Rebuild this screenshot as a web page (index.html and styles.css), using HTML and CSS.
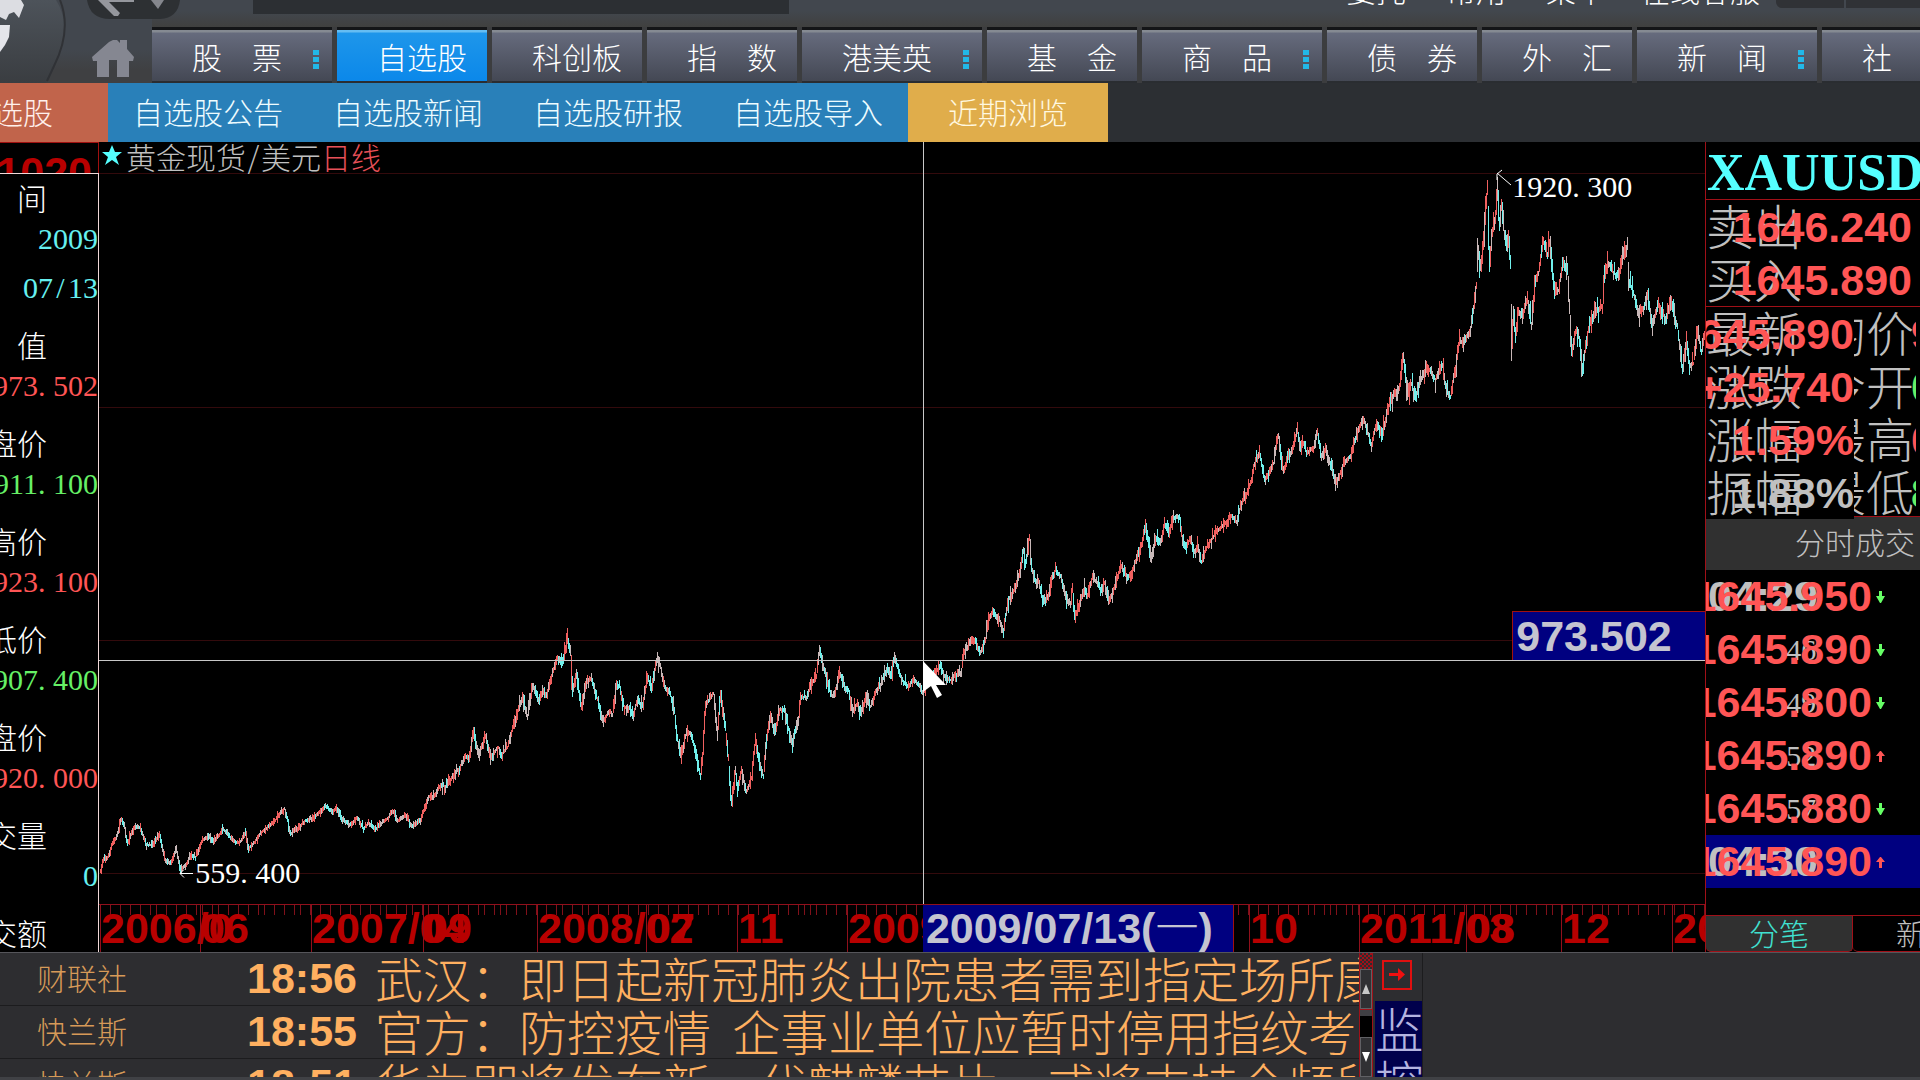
FILE: index.html
```html
<!DOCTYPE html>
<html lang="zh-CN">
<head>
<meta charset="utf-8">
<title>黄金现货/美元 日线</title>
<link rel="stylesheet" href="styles.css">
</head>
<body>
<header class="top">
  <div class="brand">
    <svg class="brand-art" viewBox="0 0 152 83" aria-hidden="true">
      <defs><linearGradient id="disc" x1="0" y1="0" x2="0" y2="1"><stop offset="0" stop-color="#4d535a"/><stop offset="1" stop-color="#3a3d41"/></linearGradient></defs>
      <path d="M56 0Q72 26 57 60Q53 73 46 83H0V0Z" fill="url(#disc)"/>
      <path d="M60 0Q72 30 54 66L47 81" fill="none" stroke="#303236" stroke-width="2"/>
      <path d="M0 0H21L24 5L19 18L14 12L9 14L6 20L0 17Z" fill="#dcdde2"/>
      <path d="M0 25H10L9 37L5 45L0 52Z" fill="#e4e5ea"/>
      <path d="M87 0Q90 19 110 19H160Q178 18 180 0Z" fill="#2d3033"/>
      <path d="M98 0H134V2H109L120 13L118 16H114Z" fill="#95979d"/>
      <path d="M151 0H164L158 9Z" fill="#85878d"/>
      <path d="M92 57L109 42L113 40H117L120 43V40H127V49L134 57L133 61H129V77H117V60H109V77H97V61H93Z" fill="#858791"/>
    </svg>
  </div>
  <div class="top-body">
    <div class="utility">
      <input class="search" type="text" aria-label="搜索">
      <a href="#">委托</a><a href="#">常用</a><a href="#">菜单</a><a href="#">在线客服</a>
      <button class="window-button" aria-label="最小化"></button><button class="window-button" aria-label="最大化"></button>
    </div>
    <nav class="tabs">
      <a class="tab wide" href="#">股　票<i class="dots"></i></a>
      <a class="tab active" href="#">自选股</a>
      <a class="tab" href="#">科创板</a>
      <a class="tab" href="#">指　数</a>
      <a class="tab wide" href="#">港美英<i class="dots"></i></a>
      <a class="tab" href="#">基　金</a>
      <a class="tab wide" href="#">商　品<i class="dots"></i></a>
      <a class="tab" href="#">债　券</a>
      <a class="tab" href="#">外　汇</a>
      <a class="tab wide" href="#">新　闻<i class="dots"></i></a>
      <a class="tab" href="#">社　区</a>
    </nav>
  </div>
</header>
<nav class="subtabs">
  <a class="own" href="#">自选股</a>
  <a href="#">自选股公告</a>
  <a href="#">自选股新闻</a>
  <a href="#">自选股研报</a>
  <a href="#">自选股导入</a>
  <a class="recent" href="#">近期浏览</a>
</nav>
<main class="main">
  <aside class="readout">
    <div class="scale-top num">1020</div>
    <div class="readout-list">
      <div class="label">时　间</div>
      <div class="value cyan">2009</div>
      <div class="value cyan">07<span class="slash">/</span>13</div>
      <div class="label">数　值</div>
      <div class="value red">973<span class="dot">.</span>502</div>
      <div class="label">开盘价</div>
      <div class="value green">911<span class="dot">.</span>100</div>
      <div class="label">最高价</div>
      <div class="value red">923<span class="dot">.</span>100</div>
      <div class="label">最低价</div>
      <div class="value green">907<span class="dot">.</span>400</div>
      <div class="label">收盘价</div>
      <div class="value red">920<span class="dot">.</span>000</div>
      <div class="label">成交量</div>
      <div class="value cyan">0</div>
      <div class="label">成交额</div>
    </div>
  </aside>
  <section class="chart">
    <div class="plot">
      <svg class="plot-art" id="plot" viewBox="99 142 1606 762" preserveAspectRatio="none" aria-hidden="true">
        <path d="M99 173.500H1705M99 407.500H1705M99 640.500H1705M99 873.500H1705" stroke="#330a0c"/>
        <g id="bars"></g>
        <path d="M193 873.500H180M184 869.500L180 873.500L184 877.500" fill="none" stroke="#fff"/>
        <path d="M1511 185L1497 173M1502 170L1497 174V180" fill="none" stroke="#fff"/>
        <path d="M923.500 142V904M99 660.500H1705" stroke="#c8c8c8"/>
        <path d="M923 661V692L931 686L937 698L942 695L936 685H946Z" fill="#fff"/>
      </svg>
      <h1 class="chart-title"><svg class="star" viewBox="0 0 20 20" aria-hidden="true"><path d="M10 0L13 7H20L14 12L17 20L10 15L3 20L6 12L0 7H7Z" fill="#5ff"/></svg>黄金现货<span class="slash">/</span>美元<span class="period">日线</span></h1>
      <span class="mark high">1920<span class="dot">.</span>300</span>
      <span class="mark low">559<span class="dot">.</span>400</span>
      <output class="price-flag num">973.502</output>
    </div>
    <div class="axis num" id="axis">
      <svg class="ticks" id="ticks" viewBox="99 0 1606 10" preserveAspectRatio="none" aria-hidden="true"></svg>
      <output class="date-flag">2009/07/13(<span class="weekday">一</span>)</output>
    </div>
  </section>
  <aside class="quote">
    <h2 class="symbol">XAUUSD</h2>
    <div class="block">
      <div class="cell full"><span class="name">卖出</span><span class="num red">1646.240</span></div>
      <div class="cell full"><span class="name">买入</span><span class="num red">1645.890</span></div>
    </div>
    <div class="block stats">
      <div class="pair"><div class="cell"><span class="name">最新</span><span class="num red">1645.890</span></div><div class="side"><span class="name">均价</span><span class="num red">9</span></div></div>
      <div class="pair"><div class="cell"><span class="name">涨跌</span><span class="num red">+25.740</span></div><div class="side"><span class="name">今开</span><span class="num green">0</span></div></div>
      <div class="pair"><div class="cell"><span class="name">涨幅</span><span class="num red">1.59%</span></div><div class="side"><span class="name">最高</span><span class="num red">0</span></div></div>
      <div class="pair"><div class="cell"><span class="name">振幅</span><span class="num gray">1.88%</span></div><div class="side"><span class="name">最低</span><span class="num green">8</span></div></div>
    </div>
    <h3 class="deals-title">分时成交</h3>
    <div class="deals">
      <div class="deal"><time class="num gray">04:29</time><span class="num red">1645.950</span><svg class="arrow down" viewBox="0 0 9 12"><path d="M3 0H6V5H9L5 12H4L0 5H3Z"/></svg></div>
      <div class="deal"><time class="sec">:46</time><span class="num red">1645.890</span><svg class="arrow down" viewBox="0 0 9 12"><path d="M3 0H6V5H9L5 12H4L0 5H3Z"/></svg></div>
      <div class="deal"><time class="sec">:49</time><span class="num red">1645.800</span><svg class="arrow down" viewBox="0 0 9 12"><path d="M3 0H6V5H9L5 12H4L0 5H3Z"/></svg></div>
      <div class="deal"><time class="sec">:52</time><span class="num red">1645.890</span><svg class="arrow up" viewBox="0 0 9 12"><path d="M3 12H6V6H9L5 1H4L0 6H3Z"/></svg></div>
      <div class="deal"><time class="sec">:57</time><span class="num red">1645.880</span><svg class="arrow down" viewBox="0 0 9 12"><path d="M3 0H6V5H9L5 12H4L0 5H3Z"/></svg></div>
      <div class="deal current"><time class="num gray">04:30</time><span class="num red">1645.890</span><svg class="arrow up" viewBox="0 0 9 12"><path d="M3 12H6V6H9L5 1H4L0 6H3Z"/></svg></div>
    </div>
    <div class="quote-tabs"><button class="on">分笔</button><button>新闻</button></div>
  </aside>
</main>
<footer class="foot">
  <ul class="news">
    <li><span class="source">财联社</span><time class="num">18:56</time><a href="#">武汉：即日起新冠肺炎出院患者需到指定场所康</a></li>
    <li><span class="source">快兰斯</span><time class="num">18:55</time><a href="#">官方：防控疫情&nbsp;&nbsp;企事业单位应暂时停用指纹考</a></li>
    <li><span class="source">快兰斯</span><time class="num">18:51</time><a href="#">华为即将发布新一代麒麟芯片，或将支持全频段</a></li>
  </ul>
  <div class="scroll">
    <span class="scroll-cap"></span>
    <button class="scroll-button" aria-label="向上"><svg viewBox="0 0 8 10"><path d="M4 0L8 10H0Z" fill="#c8c8c8"/></svg></button>
    <span class="thumb"></span>
    <span class="track"></span>
    <button class="scroll-button" aria-label="向下"><svg viewBox="0 0 8 10"><path d="M4 10L8 0H0Z" fill="#fff"/></svg></button>
  </div>
  <div class="monitor">
    <button class="expand" aria-label="展开"><svg viewBox="0 0 30 30"><path d="M1 1H29V29H1Z" fill="none" stroke="#e01010" stroke-width="2"/><path d="M7 13H16V8L23 14.500L16 21V16H7Z" fill="#f01010"/></svg></button>
    <button class="watch">监控</button>
  </div>
</footer>
<script src="chart.js"></script>
</body>
</html>
```
FILE: styles.css
```css
* { box-sizing: border-box; }
html, body { height: 100%; }
body {
  margin: 0;
  display: flex;
  flex-direction: column;
  overflow: hidden;
  background: #2d2d30;
  color: #c0c0c0;
  font: 300 30px/46px "Noto Sans CJK SC", sans-serif;
  white-space: nowrap;
}
a { color: inherit; text-decoration: none; }
button, input { font: inherit; color: inherit; border: 0; padding: 0; background: none; }
h1, h2, h3, ul { margin: 0; padding: 0; font-size: 30px; font-weight: 300; list-style: none; }
svg { display: block; }
.num { font-family: "Liberation Sans", "Noto Sans CJK SC", sans-serif; font-size: 43px; font-weight: 700; }
.red { color: #ff5555; }
.green { color: #66f066; }
.gray { color: #c0c0c0; }
.cyan { color: #66f0f0; }
.dot { display: inline-block; flex: none; width: 15px; }
.slash { flex: none; width: 15px; text-align: center; }

.top { flex: none; display: flex; height: 83px; background: linear-gradient(#42474e 60%, #3f4042 85%); overflow: hidden; }
.brand { flex: none; position: relative; z-index: 1; width: 152px; }
.brand-art { width: 152px; height: 83px; overflow: visible; }
.top-body { flex: 1; min-width: 0; }
.utility { display: flex; justify-content: flex-end; height: 27px; color: #fff; line-height: 30px; background: linear-gradient(#42474e 40%, #40403f); overflow: hidden; }
.utility a { height: 30px; margin: -26px 40px 0 0; }
.utility a:nth-of-type(3) { margin-right: 34px; }
.utility a:nth-of-type(4) { margin-right: 16px; }
.search { width: 536px; height: 14px; margin: 0 auto 0 101px; background: #2c2f33; }
.window-button { width: 68px; height: 8px; margin-right: 2px; background: #303236; border-bottom-left-radius: 6px; }
.window-button:last-child { width: 74px; margin-right: 0; border-radius: 0; }
.tabs { display: flex; gap: 5px; height: 56px; background: #3c3d3f; }
.tab {
  flex: none;
  position: relative;
  width: 150px;
  padding-left: 40px;
  border-top: 3px solid #141517;
  border-bottom: 2px solid #2a2d31;
  background: linear-gradient(#858a92 2px, #666b7d 3px, #444854);
  color: #fff;
  line-height: 52px;
}
.wide { width: 180px; }
.active { background: linear-gradient(#65bdf2 2px, #1e96ea 3px, #0b88ea); }
.dots { position: absolute; left: 161px; top: 20px; width: 6px; height: 20px; background: repeating-linear-gradient(#22b8e8 0 5px, transparent 5px 7px); }

.subtabs { flex: none; display: flex; height: 59px; background: #2c2f33; overflow: hidden; }
.subtabs a { flex: none; width: 200px; background: #2980b9; color: #eefcff; text-align: center; line-height: 57px; }
.subtabs .own { margin-left: -92px; background: #c1644b; color: #fff0ec; }
.subtabs .recent { background: #e0ad4b; color: #fff8e0; }

.main { flex: 1; min-height: 0; display: flex; background: #000; }
.readout { flex: none; width: 99px; overflow: hidden; display: flex; flex-direction: column; }
.scale-top { flex: none; height: 31px; padding-top: 8px; line-height: 43px; color: #b80000; overflow: hidden; display: flex; justify-content: flex-end; padding-right: 6px; border-top: 1px solid #a01010; border-right: 1px solid #a01010; }
.readout-list { flex: 1; min-height: 0; border: 1px solid #f0d8d8; border-width: 1px 1px 0 0; overflow: hidden; }
.label { display: flex; justify-content: flex-end; width: 47px; height: 49px; color: #fff; }
.value { display: flex; justify-content: flex-end; height: 49px; line-height: 31px; font-family: "Liberation Serif", serif; font-weight: 400; }

.chart { flex: 1; min-width: 0; display: flex; flex-direction: column; }
.plot { flex: 1; min-height: 0; position: relative; overflow: hidden; }
.plot-art { position: absolute; inset: 0; width: 100%; height: 100%; }
.chart-title { position: relative; display: flex; padding-left: 3px; line-height: 28px; color: #c0c0c0; }
.star { width: 20px; height: 20px; margin: 3px 4px 0 0; }
.period { color: #e85058; }
.mark { position: absolute; color: #fff; font-family: "Liberation Serif", serif; font-weight: 400; line-height: 30px; }
.high { left: 88%; top: 30px; }
.low { left: 6%; top: 94%; }
.price-flag { position: absolute; right: 0; bottom: 244px; width: 12%; height: 49px; padding-left: 3px; line-height: 49px; color: #c4c4d0; background: #000080; border: 1px solid #a01010; border-width: 1px 0 0 1px; }
.axis { flex: none; position: relative; height: 48px; border-top: 1px solid #90101c; overflow: hidden; color: #b80000; line-height: 47px; }
.ticks { position: absolute; left: 0; top: 0; width: 100%; height: 10px; }
.axis-label { position: absolute; top: 0; height: 47px; border-left: 1px solid #90101c; }
.date-flag { position: absolute; left: 51.3%; top: 0; width: 19.4%; height: 47px; padding-left: 3px; background: #000080; color: #c4c4d0; border-right: 1px solid #a01010; overflow: hidden; }
.weekday { font-weight: 300; }

.quote { flex: none; width: 215px; display: flex; flex-direction: column; border-left: 1px solid #a01018; overflow: hidden; }
.symbol { flex: none; height: 57px; padding-left: 1px; font: 700 52px/62px "Liberation Serif", serif; color: #55ffff; }
.block { flex: none; border-top: 1px solid #a01018; }
.stats { height: 210px; }
.cell { display: grid; grid-template-columns: 100%; width: 148px; height: 53px; line-height: 55px; background: #000; overflow: hidden; }
.full { width: 206px; }
.cell > *, .deal > * { grid-area: 1 / 1; }
.cell .num { justify-self: end; }
.name { font-size: 48px; line-height: 49px; color: #c0c0c0; }
.pair { display: flex; height: 53px; line-height: 55px; }
.pair .cell { flex: none; position: relative; z-index: 1; }
.side { flex: none; display: flex; width: 98px; margin-left: -36px; overflow: hidden; }
.side .num { margin-left: -3px; }
.deals-title { flex: none; height: 54px; padding-right: 5px; border-top: 1px solid #a01018; background: #303030; text-align: right; line-height: 49px; }
.deals { flex: 1; min-height: 0; overflow: hidden; }
.deal { display: grid; grid-template-columns: 166px 9px; column-gap: 4px; align-items: center; height: 53px; line-height: 53px; }
.deal > .num.red { justify-self: end; }
.deal > time.num { padding-left: 2px; }
.deal > .sec { padding-left: 72px; font-family: "Liberation Serif", serif; font-weight: 400; }
.deal > .arrow { grid-area: 1 / 2; width: 9px; height: 12px; }
.down { fill: #66ff66; }
.up { fill: #ff5555; }
.current { background: #000080; }
.quote-tabs { flex: none; display: flex; height: 37px; border-top: 1px solid #a01018; line-height: 32px; }
.quote-tabs button { display: flex; justify-content: center; flex: none; width: 147px; height: 36px; border: 1px solid #a01018; border-width: 0 1px 1px 0; border-radius: 0 0 5px 5px; }
.quote-tabs .on { background: #303030; color: #40e0d0; }

.foot { flex: none; display: flex; height: 128px; border-top: 1px solid #55555a; border-bottom: 3px solid #404145; overflow: hidden; }
.news { flex: none; width: 70.8%; overflow: hidden; }
.news li { display: flex; height: 53px; padding-left: 37px; border-bottom: 1px solid #1c1c1e; line-height: 48px; color: #ffb060; overflow: hidden; }
.news li > * { flex: none; }
.source { width: 210px; color: #d69a58; }
.news time { width: 128px; line-height: 51px; }
.news a { font-size: 48px; }
.scroll { flex: none; display: flex; flex-direction: column; width: 14px; margin-right: 2px; border-left: 1px solid #a01018; border-right: 1px solid #a01018; background: #000; }
.scroll-cap { height: 16px; background: repeating-conic-gradient(#a01018 0 25%, #2d2d30 0 50%) 0 0 / 4px 4px; }
.scroll-button { height: 40px; background: #303033; border: 1px solid #606064; }
.scroll-button svg { width: 8px; height: 10px; margin: auto; }
.thumb { height: 7px; background: #404044; border-top: 1px solid #a01018; }
.track { flex: 1; }
.monitor { flex: none; display: flex; flex-direction: column; width: 48px; border-right: 1px solid #1c1c1e; }
.expand { display: flex; flex: none; height: 48px; padding: 7px 6px; }
.expand svg { width: 32px; height: 30px; }
.watch { flex: none; height: 106px; background: #00004c; color: #b4b4e0; font-size: 48px; line-height: 53px; white-space: normal; }
```
FILE: chart.js
```js
const SVG = "http://www.w3.org/2000/svg";
const path = [
100,872,103,860,108,857,112,843,116,838,121,818,124,828,127,845,130,835,135,826,140,828,146,845,152,845,159,834,165,862,170,863,176,850,180,870,186,864,190,855,195,857,202,840,208,836,212,842,218,836,223,829,228,836,236,843,240,842,245,833,248,849,254,842,261,832,268,827,275,820,284,808,287,820,290,834,298,828,305,820,312,819,320,811,325,806,332,812,336,808,342,820,350,825,357,817,363,829,368,823,375,830,382,822,388,818,392,810,397,821,405,815,412,827,420,820,428,797,435,795,440,785,446,787,453,775,459,768,464,758,469,757,473,730,
478,755,485,737,490,757,498,747,501,755,507,747,515,718,522,697,527,718,532,685,539,702,542,690,546,697,551,675,557,658,563,662,567,637,570,653,572,693,576,675,581,707,586,683,591,678,597,700,603,722,609,710,612,715,616,685,619,687,624,708,630,707,632,718,637,700,642,707,647,677,651,688,657,657,660,668,664,687,670,695,674,713,677,740,681,757,685,735,690,733,695,750,700,777,702,760,705,703,709,700,713,693,717,733,720,693,725,730,728,760,731,805,735,770,737,790,741,770,746,793,751,777,755,740,760,767,763,777,766,740,770,717,775,733,779,710,784,710,788,730,792,743,798,720,800,697,806,697,813,680,816,675,819,650,825,675,829,690,832,697,836,687,839,672,844,687,848,690,852,713,857,703,860,713,866,697,870,707,876,690,881,683,886,670,891,675,894,656,899,673,903,682,908,687,913,678,919,687,922,693,
928,684,934,675,940,665,944,677,950,680,955,675,961,672,963,653,966,648,973,638,980,652,985,640,987,622,992,613,998,617,1003,630,1008,600,1014,590,1019,573,1023,550,1025,567,1029,535,1031,567,1036,585,1038,580,1043,603,1048,595,1051,580,1055,570,1061,578,1065,597,1070,605,1072,587,1074,618,1078,607,1084,587,1087,597,1092,577,1097,583,1101,592,1104,582,1109,602,1114,587,1121,565,1127,580,1131,572,1137,557,1142,543,1145,523,1151,558,1155,538,1161,540,1164,523,1168,533,1173,517,1179,517,1182,540,1186,547,1190,538,1194,553,1197,545,1201,563,1206,547,1214,535,1220,528,1225,523,1231,515,1236,522,1241,503,1246,493,1251,480,1253,467,1259,452,1264,480,1269,473,1273,463,1278,434,1283,473,1287,460,1292,450,1297,430,1300,450,1303,442,1306,453,1313,448,1317,432,1321,458,1325,450,1329,460,1335,483,1340,473,1344,462,1350,457,1355,437,1363,418,1368,435,1371,445,1376,423,1382,433,
1388,407,1395,393,1399,387,1403,357,1407,397,1411,383,1415,400,1420,380,1428,368,1435,380,1442,365,1445,388,1450,397,1455,367,1458,343,1463,340,1470,330,1473,307,1476,283,1477,243,1480,270,1483,243,1487,187,1489,268,1492,230,1495,217,1497,182,1499,230,1501,200,1503,230,1506,247,1508,233,1510,267,1511,360,1513,310,1515,337,1518,310,1522,317,1527,297,1531,327,1535,280,1538,273,1543,240,1547,257,1549,240,1554,293,1558,290,1563,260,1567,273,1569,310,1571,353,1576,327,1579,340,1582,370,1587,333,1593,313,1602,305,1604,270,1608,263,1613,273,1618,277,1625,247,1627,247,1628,280,1633,293,1638,313,1643,310,1647,293,1652,327,1658,303,1665,318,1671,305,1677,327,1682,370,1686,343,1689,367,1693,363,1697,327,1701,353,1705,330
];
let seed = 7;
const random = () => (seed = (seed * 16807) % 2147483647) / 2147483647;
const strokes = { "#f0605f": "", "#70f0ec": "", "#c8b8b8": "" };
let segment = 0;
for (let x = 100; x < 1705; x++) {
  while (path[segment + 2] < x) segment += 2;
  const [x0, y0, x1, y1] = path.slice(segment, segment + 4);
  const slope = (y1 - y0) / (x1 - x0);
  const y = y0 + slope * (x - x0);
  const half = Math.abs(slope) / 2;
  const spread = x < 440 ? 5 : x < 1380 ? 10 : 14;
  const high = Math.max(y - half, Math.min(y0, y1)) - random() * random() * spread - 1;
  const low = Math.min(y + half, Math.max(y0, y1)) + random() * random() * spread + 1;
  const top = Math.max(173, high);
  const bottom = Math.min(874, low);
  const pick = random();
  const color = pick < 0.35 ? "#c8b8b8" : (slope < 0) === (pick < 0.92) ? "#f0605f" : "#70f0ec";
  strokes[color] += `M${x + 0.5} ${Math.round(top)}V${Math.round(bottom)}`;
}
const addPath = (parent, d, stroke) => {
  const node = document.createElementNS(SVG, "path");
  node.setAttribute("d", d);
  node.setAttribute("stroke", stroke);
  parent.append(node);
};
for (const color in strokes) addPath(document.getElementById("bars"), strokes[color], color);

let ticks = "";
for (let x = 110; x < 1705; x += random() < 0.2 ? 6 : 10) ticks += `M${x + 0.5} 0V10`;
addPath(document.getElementById("ticks"), ticks, "#80101a");

const dates = [[100, "2006/0"], [200, "06"], [311, "2007/04"], [423, "09"], [537, "2008/02"], [646, "07"], [737, "11"], [847, "2009/04"], [1249, "10"], [1359, "2011/03"], [1466, "08"], [1561, "12"], [1672, "2012"]];
const flag = document.querySelector(".date-flag");
for (const [x, text] of dates) {
  const label = document.createElement("span");
  label.className = "axis-label";
  label.style.left = `${(x - 99) / 16.06}%`;
  label.textContent = text;
  flag.before(label);
}
```
